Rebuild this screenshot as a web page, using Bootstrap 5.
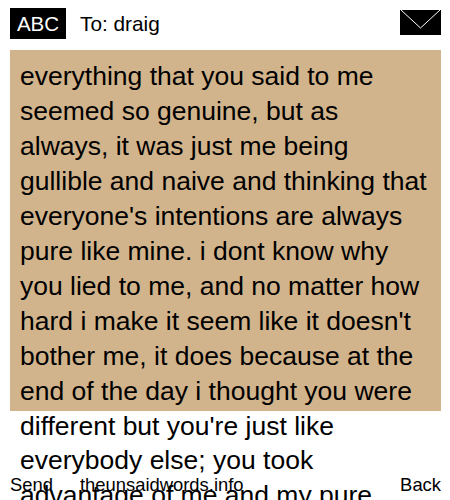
<!DOCTYPE html>
<html><head><meta charset="utf-8">
<link href="https://cdn.jsdelivr.net/npm/bootstrap@5.3.0/dist/css/bootstrap.min.css" rel="stylesheet">
<style>
html,body{height:500px;overflow:hidden;background:#fff;}
body{font-family:"Liberation Sans",Arial,sans-serif;color:#000;}
.phone-top{height:50px;padding:8px 9px 0 10px;}
.abc-tag{background:#000;color:#fff;font-size:20.5px;line-height:31px;height:31px;width:56px;text-align:center;}
.to-line{font-size:20.8px;line-height:31px;margin-left:14px;}
.env-icon{margin-top:2px;}
.msg-wrap{height:450px;overflow:hidden;padding:0 9px 0 10px;position:relative;}
.msg-box{background:#d2b48c;height:361px;padding:9px 10px 0;}
.msg-text{font-size:26.5px;line-height:34.95px;margin:0;width:411px;}
.soft-keys{position:absolute;left:0;right:0;bottom:0;height:30px;font-size:18.4px;line-height:30px;padding:0 9px 0 10px;}
.soft-mid{margin-left:27px;}
</style></head><body>
<div class="d-flex align-items-start phone-top">
<div class="abc-tag">ABC</div><div class="to-line">To: draig</div>
<svg class="ms-auto env-icon" width="41" height="25" viewBox="0 0 41 25"><rect width="41" height="25" fill="#000"/><path d="M1 0L20.500 18L40 0" fill="none" stroke="#fff" stroke-width="1"/></svg>
</div>
<div class="msg-wrap"><div class="msg-box"><p class="msg-text">everything that you said to me seemed so genuine, but as always, it was just me being gullible and naive and thinking that everyone's intentions are always pure like mine. i dont know why you lied to me, and no matter how hard i make it seem like it doesn't bother me, it does because at the end of the day i thought you were different but you're just like everybody else; you took advantage of me and my pure</p></div></div>
<div class="d-flex soft-keys"><span>Send</span><span class="soft-mid">theunsaidwords.info</span><span class="ms-auto">Back</span></div>
<script src="https://cdn.jsdelivr.net/npm/bootstrap@5.3.0/dist/js/bootstrap.bundle.min.js"></script>
</body></html>
